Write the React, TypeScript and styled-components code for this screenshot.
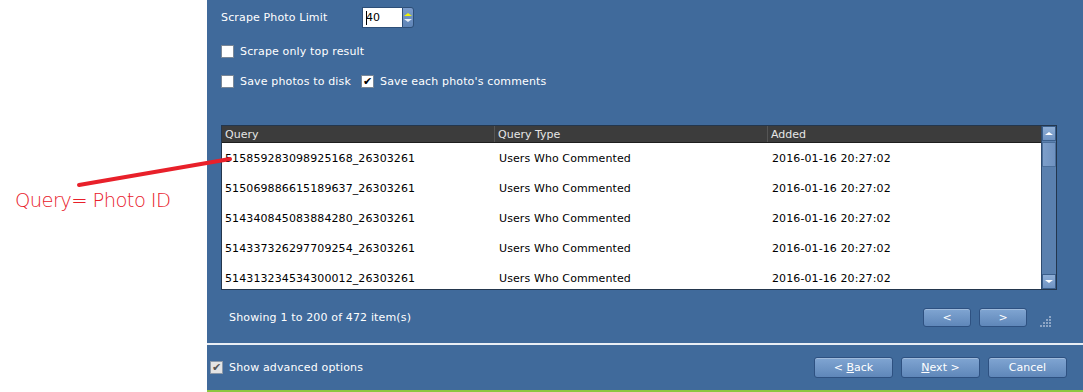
import React from 'react';
import styled, { createGlobalStyle } from 'styled-components';

const GlobalStyle = createGlobalStyle`
  html, body {
    margin: 0;
    padding: 0;
    background: #fff;
  }
  body {
    font-family: 'DejaVu Sans', Verdana, sans-serif;
    font-size: 11px;
  }
`;

const rows = [
  '515859283098925168_26303261',
  '515069886615189637_26303261',
  '514340845083884280_26303261',
  '514337326297709254_26303261',
  '514313234534300012_26303261',
];

const Page = styled.div`
  position: relative;
  display: flex;
  width: 1083px;
  height: 392px;
  overflow: hidden;
`;

const NoteArea = styled.div`
  width: 207px;
  flex: none;
  padding: 189px 0 0 15px;
  box-sizing: border-box;
  background: #fff;
`;

const NoteText = styled.div`
  font-family: 'DejaVu Sans', sans-serif;
  font-weight: 200;
  font-size: 19.5px;
  color: #e8202a;
  letter-spacing: -0.6px;
  white-space: nowrap;
`;

const Arrow = styled.svg`
  position: absolute;
  left: 0;
  top: 0;
  pointer-events: none;
`;

const Wizard = styled.div`
  flex: 1;
  display: flex;
  flex-direction: column;
  background: #406a9b;
  color: #fff;
`;

const Body = styled.div`
  height: 343px;
  padding: 7px 26px 0 14px;
  box-sizing: border-box;
  display: flex;
  flex-direction: column;
`;

const FieldRow = styled.div<{ $mt?: number }>`
  display: flex;
  align-items: center;
  height: 21px;
  margin-top: ${({ $mt }) => $mt ?? 0}px;
`;

const Label = styled.span<{ $w?: number }>`
  width: ${({ $w }) => ($w ? `${$w}px` : 'auto')};
  flex: none;
  white-space: nowrap;
  color: #fff;
  letter-spacing: 0.15px;
`;

const Spin = styled.div`
  display: flex;
  height: 21px;
`;

const SpinInput = styled.div`
  width: 36px;
  height: 19px;
  background: #fff;
  border: 1px solid #2d4f78;
  border-right: none;
  color: #000;
  display: flex;
  align-items: center;
  padding-left: 3px;
  box-sizing: content-box;
`;

const Caret = styled.span`
  display: inline-block;
  width: 1px;
  height: 14px;
  background: #000;
  margin-right: -1px;
`;

const SpinButtons = styled.div`
  width: 12px;
  height: 21px;
  background: linear-gradient(#7c9ccb, #5e84b6);
  border: 1px solid #2d4f78;
  border-radius: 0 3px 3px 0;
  box-sizing: border-box;
  display: flex;
  flex-direction: column;
  align-items: center;
  justify-content: center;
  gap: 3px;
`;

const Tri = styled.span<{ $up?: boolean; $color: string; $size?: number }>`
  width: 0;
  height: 0;
  border-left: ${({ $size }) => $size ?? 4}px solid transparent;
  border-right: ${({ $size }) => $size ?? 4}px solid transparent;
  ${({ $up, $color, $size }) =>
    $up
      ? `border-bottom: ${($size ?? 4) - 1}px solid ${$color};`
      : `border-top: ${($size ?? 4) - 1}px solid ${$color};`}
`;

const Check = styled.span<{ $muted?: boolean }>`
  width: 13px;
  height: 13px;
  flex: none;
  box-sizing: border-box;
  background: ${({ $muted }) => ($muted ? '#e4e4e4' : '#fff')};
  border: 1px solid ${({ $muted }) => ($muted ? '#8b98a8' : '#7a8796')};
  margin-right: 6px;
  display: flex;
  align-items: center;
  justify-content: center;
  color: ${({ $muted }) => ($muted ? '#555' : '#000')};
  font-size: 11px;
  font-weight: bold;
  line-height: 1;
`;

const Grid = styled.div`
  margin-top: 33px;
  height: 165px;
  border: 1px solid #23364d;
  background: #fff;
  display: flex;
  box-sizing: border-box;
  overflow: hidden;
`;

const GridMain = styled.div`
  flex: 1;
  display: flex;
  flex-direction: column;
  overflow: hidden;
`;

const HeaderRow = styled.div`
  display: grid;
  grid-template-columns: 273px 273px 1fr;
  height: 16px;
  background: #3c3c3c;
  border-bottom: 1px solid #1e1e1e;
  flex: none;
`;

const HeaderCell = styled.div`
  padding-left: 3px;
  color: #e6e6e6;
  display: flex;
  align-items: center;
  border-right: 1px solid #555;
  box-sizing: border-box;
  &:last-child {
    border-right: none;
  }
`;

const DataRow = styled.div`
  display: grid;
  grid-template-columns: 273px 273px 1fr;
  height: 30px;
  flex: none;
`;

const Cell = styled.div<{ $pl?: number }>`
  padding-left: ${({ $pl }) => $pl ?? 4}px;
  color: #000;
  display: flex;
  align-items: center;
  white-space: nowrap;
  letter-spacing: 0.1px;
`;

const Scrollbar = styled.div`
  width: 14px;
  flex: none;
  background: #5a80ae;
  border-left: 1px solid #2f4c70;
  display: flex;
  flex-direction: column;
`;

const ScrollBtn = styled.div`
  height: 15px;
  background: linear-gradient(#8eaed6, #6f93c2);
  border: 1px solid #3b5f8b;
  box-sizing: border-box;
  display: flex;
  align-items: center;
  justify-content: center;
  flex: none;
`;

const Thumb = styled.div`
  height: 25px;
  margin-top: 1px;
  background: linear-gradient(90deg, #7d9fca, #6f92c0);
  border: 1px solid #4b6f9b;
  box-sizing: border-box;
`;

const ScrollSpacer = styled.div`
  flex: 1;
`;

const PagerBar = styled.div`
  flex: 1;
  display: flex;
  align-items: center;
  padding: 0 5px 0 8px;
`;

const Status = styled.span`
  flex: 1;
  color: #fff;
  margin-top: 2px;
  letter-spacing: 0.15px;
`;

const Btn = styled.button<{ $w: number; $h: number }>`
  width: ${({ $w }) => $w}px;
  height: ${({ $h }) => $h}px;
  padding: 0;
  font-family: 'DejaVu Sans', Verdana, sans-serif;
  font-size: 11px;
  color: #fff;
  background: linear-gradient(#80a5d2, #5f87b9);
  border: 1px solid #2e5181;
  border-radius: 3px;
  box-shadow: inset 0 1px 0 rgba(255, 255, 255, 0.25);
  display: flex;
  align-items: center;
  justify-content: center;
  flex: none;
`;

const PagerButtons = styled.div`
  display: flex;
  gap: 8px;
  margin-top: 2px;
`;

const Grip = styled.svg`
  margin: 10px 0 0 13px;
  flex: none;
`;

const Divider = styled.div`
  height: 2px;
  background: #e9eef5;
  flex: none;
`;

const Footer = styled.div`
  flex: 1;
  display: flex;
  align-items: center;
  padding: 0 16px 0 3px;
`;

const FooterLeft = styled.div`
  flex: 1;
  display: flex;
  align-items: center;
`;

const FooterButtons = styled.div`
  display: flex;
  gap: 8px;
`;

const Accel = styled.span`
  text-decoration: underline;
`;

const GreenEdge = styled.div`
  height: 2px;
  background: #8cc63f;
  flex: none;
`;

export default function App() {
  return (
    <>
      <GlobalStyle />
      <Page>
        <NoteArea>
          <NoteText>Query= Photo ID</NoteText>
        </NoteArea>
        <Wizard>
          <Body>
            <FieldRow>
              <Label $w={141}>Scrape Photo Limit</Label>
              <Spin>
                <SpinInput>
                  <Caret />
                  40
                </SpinInput>
                <SpinButtons>
                  <Tri $up $color="#f2f200" $size={4} />
                  <Tri $color="#e6eef8" $size={4} />
                </SpinButtons>
              </Spin>
            </FieldRow>
            <FieldRow $mt={13}>
              <Check />
              <Label>Scrape only top result</Label>
            </FieldRow>
            <FieldRow $mt={9}>
              <Check />
              <Label $w={121}>Save photos to disk</Label>
              <Check>✔</Check>
              <Label>Save each photo's comments</Label>
            </FieldRow>
            <Grid>
              <GridMain>
                <HeaderRow>
                  <HeaderCell>Query</HeaderCell>
                  <HeaderCell>Query Type</HeaderCell>
                  <HeaderCell>Added</HeaderCell>
                </HeaderRow>
                {rows.map((q) => (
                  <DataRow key={q}>
                    <Cell $pl={3}>{q}</Cell>
                    <Cell $pl={4}>Users Who Commented</Cell>
                    <Cell $pl={4}>2016-01-16 20:27:02</Cell>
                  </DataRow>
                ))}
              </GridMain>
              <Scrollbar>
                <ScrollBtn>
                  <Tri $up $color="#fff" $size={4} />
                </ScrollBtn>
                <Thumb />
                <ScrollSpacer />
                <ScrollBtn>
                  <Tri $color="#fff" $size={4} />
                </ScrollBtn>
              </Scrollbar>
            </Grid>
            <PagerBar>
              <Status>Showing 1 to 200 of 472 item(s)</Status>
              <PagerButtons>
                <Btn $w={48} $h={19}>&lt;</Btn>
                <Btn $w={48} $h={19}>&gt;</Btn>
              </PagerButtons>
              <Grip width="12" height="12" viewBox="0 0 12 12">
                {[
                  [9, 0],
                  [6, 3], [9, 3],
                  [3, 6], [6, 6], [9, 6],
                  [0, 9], [3, 9], [6, 9], [9, 9],
                ].map(([x, y]) => (
                  <rect key={`${x}-${y}`} x={x} y={y} width="2" height="2" fill="#8ea6c6" />
                ))}
              </Grip>
            </PagerBar>
          </Body>
          <Divider />
          <Footer>
            <FooterLeft>
              <Check $muted>✔</Check>
              <Label>Show advanced options</Label>
            </FooterLeft>
            <FooterButtons>
              <Btn $w={79} $h={21}>
                &lt;&nbsp;<Accel>B</Accel>ack
              </Btn>
              <Btn $w={79} $h={21}>
                <Accel>N</Accel>ext &gt;
              </Btn>
              <Btn $w={79} $h={21}>Cancel</Btn>
            </FooterButtons>
          </Footer>
          <GreenEdge />
        </Wizard>
        <Arrow width="260" height="220" viewBox="0 0 260 220">
          <line x1="79" y1="185" x2="230" y2="159" stroke="#e8202a" strokeWidth="4" strokeLinecap="round" />
        </Arrow>
      </Page>
    </>
  );
}
